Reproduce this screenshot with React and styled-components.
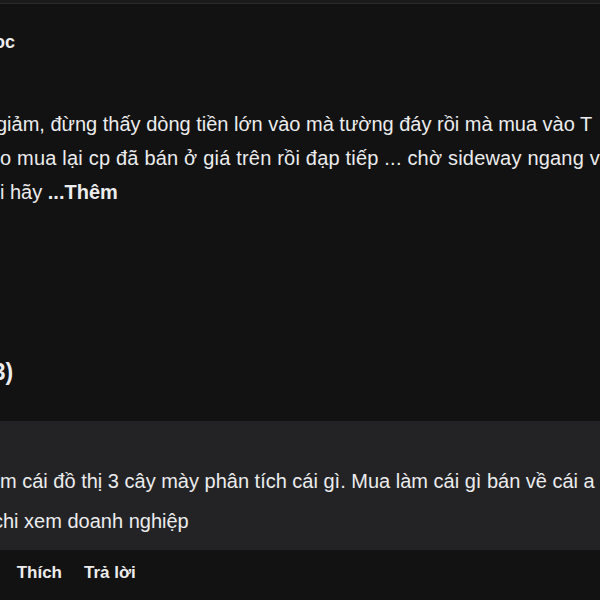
import styled, { createGlobalStyle } from "styled-components";

//==============================================================================
// STYLING
//==============================================================================
const GlobalStyle = createGlobalStyle`
  html, body {
    margin: 0;
    padding: 0;
    background: #121212;
  }
`

const Page = styled.div`
  width: 600px;
  height: 600px;
  overflow: hidden;
  background: #121212;
  color: #ececed;
  font-family: "Liberation Sans", Arial, sans-serif;
  display: flex;
  flex-direction: column;
`

const TopStrip = styled.div`
  height: 3px;
  background: #1b1b1b;
  border-bottom: 1px solid #2a2a2a;
`

const Author = styled.div`
  margin: 26px 0 0 -6px;
  font-size: 18px;
  font-weight: 700;
  line-height: 24px;
  white-space: nowrap;
`

const PostBody = styled.div`
  margin-top: 53px;
  font-size: 20px;
  line-height: 34px;
`

const Line = styled.div`
  white-space: nowrap;
  margin-left: ${props => props.$shift || 0}px;
  letter-spacing: ${props => props.$spread || 0}px;
`

const More = styled.b`
  font-weight: 700;
`

const Section = styled.div`
  margin: 148px 0 0 -15px;
  font-size: 23px;
  font-weight: 700;
  line-height: 30px;
  white-space: nowrap;
`

const CommentBox = styled.div`
  margin-top: 34px;
  background: #232326;
  padding: 40px 0 9px;
  font-size: 20px;
  line-height: 40px;
`

const Actions = styled.div`
  display: flex;
  align-items: center;
  gap: 22px;
  height: 46px;
  font-size: 17px;
  font-weight: 700;
  white-space: nowrap;
`

const Dot = styled.span`
  margin-left: -11px;
  color: #8a8a8a;
  font-weight: 700;
`

//==============================================================================
// APP
//==============================================================================
const App = () => {
    return (
        <Page>
            <GlobalStyle/>
            <TopStrip/>
            <Author>oc</Author>

            <PostBody>
                <Line $shift={-4}>giảm, đừng thấy dòng tiền lớn vào mà tường đáy rồi mà mua vào T</Line>
                <Line $spread={0.2}>o mua lại cp đã bán ở giá trên rồi đạp tiếp ... chờ sideway ngang v</Line>
                <Line>i hãy <More>...Thêm</More></Line>
            </PostBody>

            <Section>(3)</Section>

            <CommentBox>
                <Line>m cái đồ thị 3 cây mày phân tích cái gì. Mua làm cái gì bán về cái a</Line>
                <Line $shift={-7}>chi xem doanh nghiệp</Line>
            </CommentBox>

            <Actions>
                <Dot>·</Dot>
                <span>Thích</span>
                <span>Trả lời</span>
            </Actions>
        </Page>
    )
}

export default App;
